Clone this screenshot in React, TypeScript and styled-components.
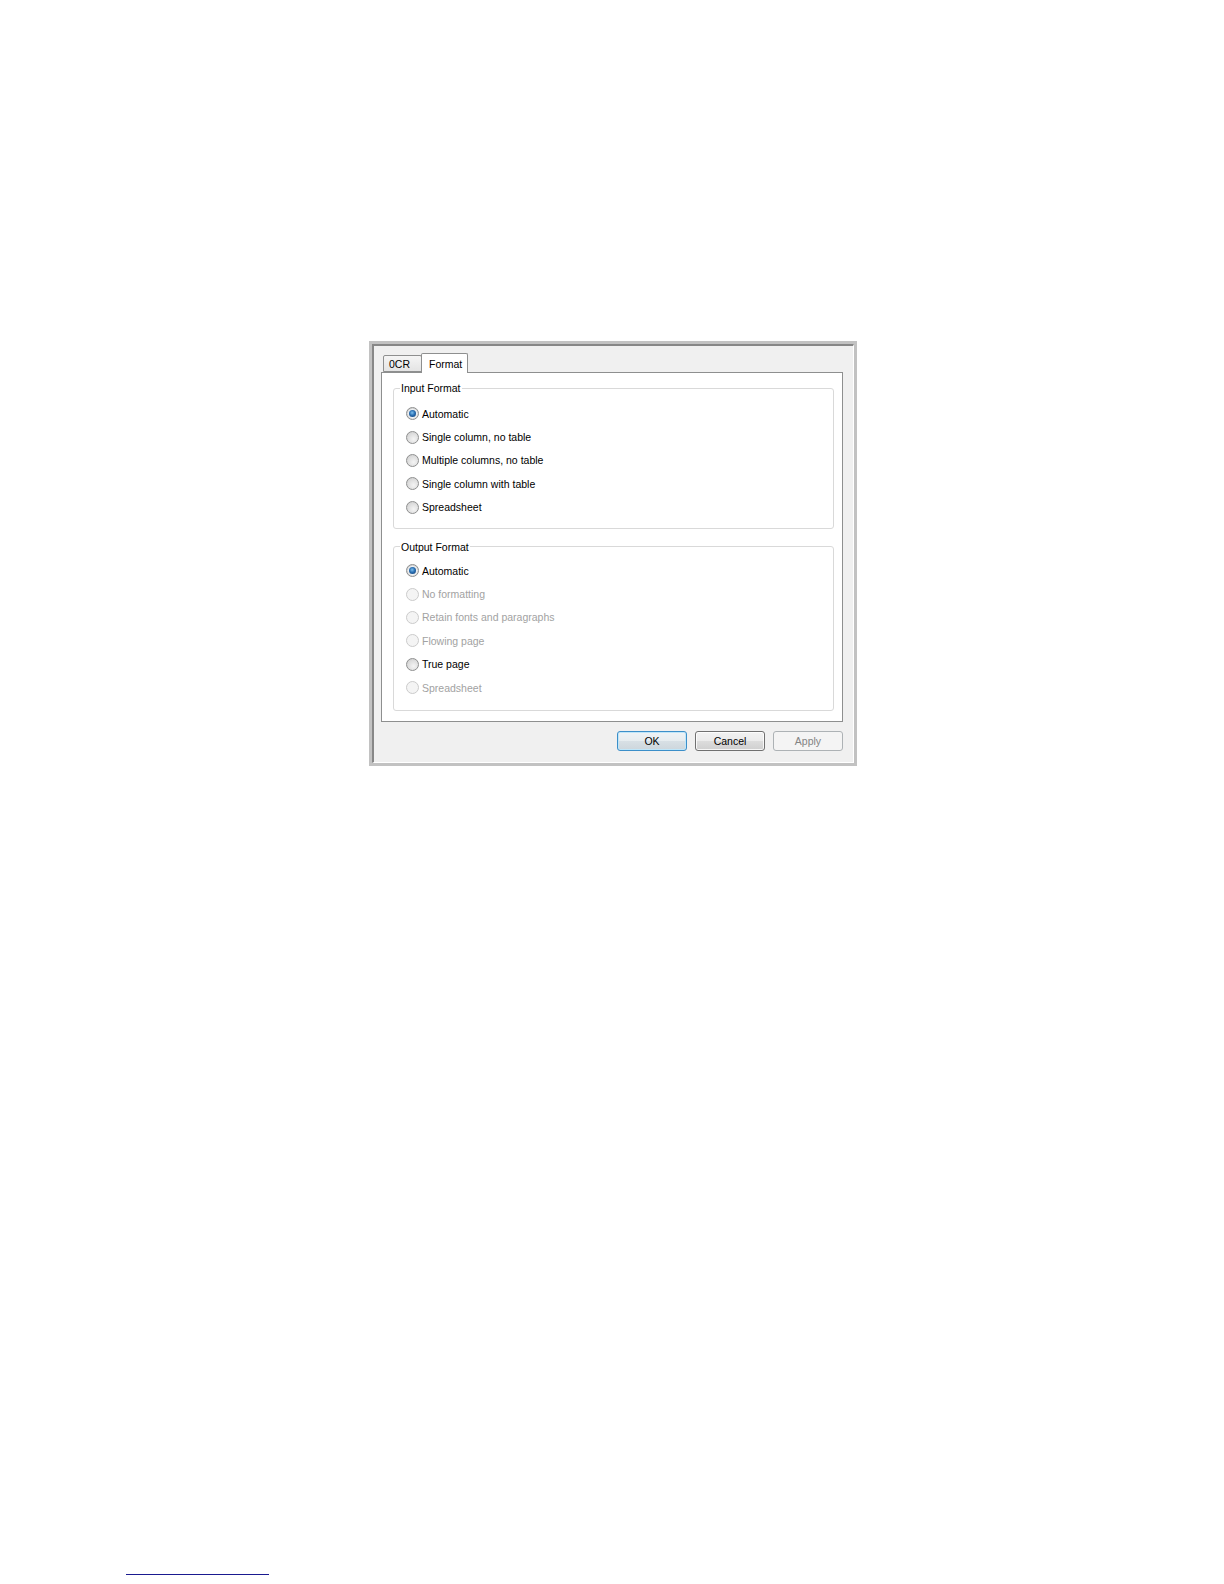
import styled, { createGlobalStyle } from "styled-components";

const GlobalStyle = createGlobalStyle`
    html, body {
        margin: 0;
        padding: 0;
        background: #ffffff;
    }
    body {
        font-family: "Liberation Sans", Arial, sans-serif;
    }
`;

const Page = styled.div`
    box-sizing: border-box;
    width: 1224px;
    height: 1584px;
    display: flex;
    flex-direction: column;
    padding: 341px 0 9px 0;
`;

const DialogSlot = styled.div`
    padding-left: 369px;
`;

const Dialog = styled.div`
    box-sizing: border-box;
    width: 488px;
    border: 3px solid #c2c2c2;
`;

const DialogInner = styled.div`
    background: #f0f0f0;
    border-top: 2px solid #878787;
    border-left: 2px solid #878787;
    border-right: 1px solid #ffffff;
    border-bottom: 1px solid #ffffff;
    padding: 7px 10px 11px 7px;
`;

const TabStrip = styled.div`
    display: flex;
    align-items: flex-end;
    height: 19px;
    padding-left: 2px;
    position: relative;
    z-index: 1;
`;

const Tab = styled.div<{ $active?: boolean; $width: number }>`
    box-sizing: border-box;
    display: flex;
    align-items: center;
    width: ${(p) => p.$width}px;
    height: ${(p) => (p.$active ? 20 : 17)}px;
    margin-bottom: ${(p) => (p.$active ? -1 : 0)}px;
    margin-left: ${(p) => (p.$active ? -1 : 0)}px;
    padding-left: ${(p) => (p.$active ? 7 : 5)}px;
    border: 1px solid #8e8f8f;
    border-bottom: ${(p) => (p.$active ? "none" : "1px solid #8e8f8f")};
    border-radius: 2px 2px 0 0;
    background: ${(p) => (p.$active ? "#ffffff" : "linear-gradient(#f5f5f5, #e4e4e4)")};
    font-size: 10.5px;
    color: #000000;
`;

const Panel = styled.div`
    background: #ffffff;
    border: 1px solid #8e8f8f;
    padding: 9px 8px 10px 11px;
`;

const Group = styled.fieldset<{ $gapTop?: number; $padTop: number; $padBottom: number }>`
    margin: ${(p) => p.$gapTop ?? 0}px 0 0 0;
    padding: ${(p) => p.$padTop}px 0 ${(p) => p.$padBottom}px 0;
    min-width: 0;
    border: 1px solid #d9d9d9;
    border-radius: 3px;
`;

const GroupLegend = styled.legend`
    margin-left: 6px;
    padding: 0 1px;
    font-size: 10.5px;
    line-height: 12px;
    color: #000000;
`;

const OptionRow = styled.label<{ $disabled?: boolean }>`
    display: flex;
    align-items: center;
    height: 23.4px;
    padding-left: 12px;
    font-size: 10.5px;
    color: ${(p) => (p.$disabled ? "#a2a2a2" : "#000000")};
`;

const RadioCircle = styled.span<{ $disabled?: boolean }>`
    box-sizing: border-box;
    width: 13px;
    height: 13px;
    flex-shrink: 0;
    margin-right: 3px;
    border-radius: 50%;
    display: flex;
    align-items: center;
    justify-content: center;
    border: 1px solid ${(p) => (p.$disabled ? "#cbcbcb" : "#8e8f8f")};
    background: ${(p) =>
        p.$disabled
            ? "#f4f4f4"
            : "radial-gradient(circle at 60% 65%, #f4f4f4 0%, #dedede 55%, #c6c6c6 100%)"};
`;

const RadioDot = styled.span`
    width: 7px;
    height: 7px;
    border-radius: 50%;
    background: radial-gradient(circle at 45% 40%, #7ec0ee 0%, #2a6fb3 45%, #0f3a6e 100%);
    box-shadow: 0 0 0 1px #eef1f4;
`;

const ButtonBar = styled.div`
    display: flex;
    justify-content: flex-end;
    gap: 8px;
    margin-top: 9px;
`;

const DialogButton = styled.button<{ $variant: "default" | "normal" | "disabled" }>`
    box-sizing: border-box;
    width: 70px;
    height: 20px;
    padding: 0;
    border-radius: 3px;
    font-family: "Liberation Sans", Arial, sans-serif;
    font-size: 10.5px;
    cursor: default;
    border: 1px solid
        ${(p) => (p.$variant === "default" ? "#3c8fc9" : p.$variant === "normal" ? "#707070" : "#adb2b5")};
    color: ${(p) => (p.$variant === "disabled" ? "#838383" : "#000000")};
    background: ${(p) =>
        p.$variant === "default"
            ? "linear-gradient(#eef3f6, #e6ecef 50%, #d8e0e5 50%, #cdd6dc)"
            : p.$variant === "normal"
            ? "linear-gradient(#f2f2f2, #ebebeb 50%, #dddddd 50%, #cfcfcf)"
            : "#f4f4f4"};
    box-shadow: ${(p) =>
        p.$variant === "default"
            ? "inset 0 0 0 1px #bfe6f9"
            : p.$variant === "normal"
            ? "inset 0 0 0 1px rgba(255, 255, 255, 0.8)"
            : "none"};
`;

const FootRule = styled.div`
    margin-top: auto;
    margin-left: 126px;
    width: 143px;
    height: 0;
    border-top: 1px solid #1a1a90;
`;

interface Option {
    label: string;
    checked?: boolean;
    disabled?: boolean;
}

const INPUT_OPTIONS: Option[] = [
    { label: "Automatic", checked: true },
    { label: "Single column, no table" },
    { label: "Multiple columns, no table" },
    { label: "Single column with table" },
    { label: "Spreadsheet" },
];

const OUTPUT_OPTIONS: Option[] = [
    { label: "Automatic", checked: true },
    { label: "No formatting", disabled: true },
    { label: "Retain fonts and paragraphs", disabled: true },
    { label: "Flowing page", disabled: true },
    { label: "True page" },
    { label: "Spreadsheet", disabled: true },
];

function OptionList({ options }: Readonly<{ options: Option[] }>) {
    return (
        <>
            {options.map((option) => (
                <OptionRow key={option.label} $disabled={option.disabled}>
                    <RadioCircle $disabled={option.disabled}>{option.checked && <RadioDot />}</RadioCircle>
                    {option.label}
                </OptionRow>
            ))}
        </>
    );
}

function App() {
    return (
        <>
            <GlobalStyle />
            <Page>
                <DialogSlot>
                    <Dialog>
                        <DialogInner>
                            <TabStrip>
                                <Tab $width={39}>0CR</Tab>
                                <Tab $width={47} $active>
                                    Format
                                </Tab>
                            </TabStrip>
                            <Panel>
                                <Group $padTop={8} $padBottom={9}>
                                    <GroupLegend>Input Format</GroupLegend>
                                    <OptionList options={INPUT_OPTIONS} />
                                </Group>
                                <Group $gapTop={12} $padTop={6} $padBottom={11}>
                                    <GroupLegend>Output Format</GroupLegend>
                                    <OptionList options={OUTPUT_OPTIONS} />
                                </Group>
                            </Panel>
                            <ButtonBar>
                                <DialogButton $variant="default">OK</DialogButton>
                                <DialogButton $variant="normal">Cancel</DialogButton>
                                <DialogButton $variant="disabled">Apply</DialogButton>
                            </ButtonBar>
                        </DialogInner>
                    </Dialog>
                </DialogSlot>
                <FootRule />
            </Page>
        </>
    );
}

export default App;
